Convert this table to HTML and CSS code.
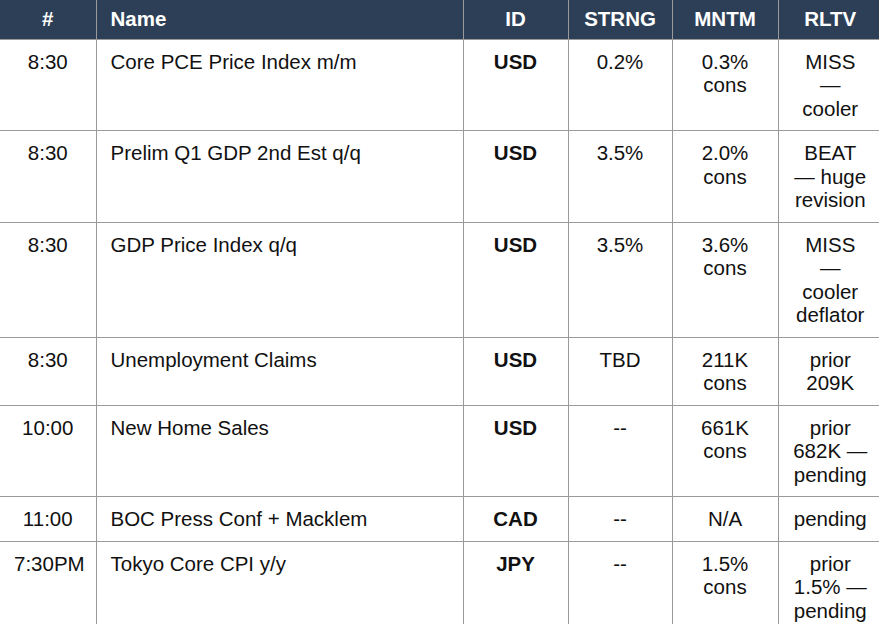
FILE: index.html
```html
<!DOCTYPE html>
<html lang="en">
<head>
<meta charset="utf-8">
<title>Calendar</title>
<link rel="stylesheet" href="styles.css">
</head>
<body>
<table class="cal">
  <colgroup>
    <col class="c-time">
    <col class="c-name">
    <col class="c-id">
    <col class="c-str">
    <col class="c-mom">
    <col class="c-rel">
  </colgroup>
  <thead>
    <tr>
      <th>#</th>
      <th class="left">Name</th>
      <th>ID</th>
      <th>STRNG</th>
      <th>MNTM</th>
      <th class="rel">RLTV</th>
    </tr>
  </thead>
  <tbody>
    <tr>
      <td>8:30</td>
      <td class="left">Core PCE Price Index m/m</td>
      <td class="cur">USD</td>
      <td>0.2%</td>
      <td>0.3% cons</td>
      <td class="rel">MISS — cooler</td>
    </tr>
    <tr>
      <td>8:30</td>
      <td class="left">Prelim Q1 GDP 2nd Est q/q</td>
      <td class="cur">USD</td>
      <td>3.5%</td>
      <td>2.0% cons</td>
      <td class="rel">BEAT — huge revision</td>
    </tr>
    <tr>
      <td>8:30</td>
      <td class="left">GDP Price Index q/q</td>
      <td class="cur">USD</td>
      <td>3.5%</td>
      <td>3.6% cons</td>
      <td class="rel">MISS — cooler deflator</td>
    </tr>
    <tr>
      <td>8:30</td>
      <td class="left">Unemployment Claims</td>
      <td class="cur">USD</td>
      <td>TBD</td>
      <td>211K cons</td>
      <td class="rel">prior 209K</td>
    </tr>
    <tr>
      <td>10:00</td>
      <td class="left">New Home Sales</td>
      <td class="cur">USD</td>
      <td>--</td>
      <td>661K cons</td>
      <td class="rel">prior 682K — pending</td>
    </tr>
    <tr>
      <td>11:00</td>
      <td class="left">BOC Press Conf + Macklem</td>
      <td class="cur">CAD</td>
      <td>--</td>
      <td>N/A</td>
      <td class="rel">pending</td>
    </tr>
    <tr>
      <td>7:30PM</td>
      <td class="left">Tokyo Core CPI y/y</td>
      <td class="cur">JPY</td>
      <td>--</td>
      <td>1.5% cons</td>
      <td class="rel">prior 1.5% — pending</td>
    </tr>
  </tbody>
</table>
</body>
</html>
```

FILE: styles.css
```css
html, body {
  margin: 0;
  padding: 0;
  background: #ffffff;
  overflow: hidden;
}

body {
  font-family: "Liberation Sans", Arial, sans-serif;
  color: #111111;
}

.cal {
  width: 884px;
  border-collapse: collapse;
  table-layout: fixed;
  font-size: 20.5px;
  line-height: 23.5px;
}

.c-time { width: 96px; }
.c-name { width: 367px; }
.c-id { width: 105px; }
.c-str { width: 104px; }
.c-mom { width: 106px; }
.c-rel { width: 106px; }

.cal th,
.cal td {
  border-right: 1px solid #9a9a9a;
  border-bottom: 1px solid #9a9a9a;
  text-align: center;
  vertical-align: top;
}

.cal th:last-child,
.cal td:last-child {
  border-right: none;
}

.cal th {
  background: #2d3f57;
  color: #ffffff;
  font-weight: bold;
  padding: 7px 14px 8px;
}

.cal td {
  padding: 10px 14px 10px;
}

.cal .rel {
  padding-right: 16px;
}

.cal .left {
  text-align: left;
}

.cal .cur {
  font-weight: bold;
}
```
